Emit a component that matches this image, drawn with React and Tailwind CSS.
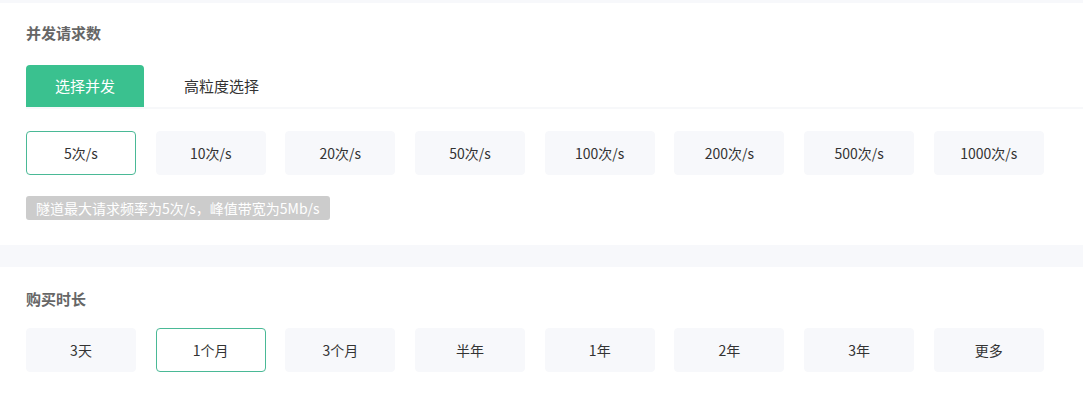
import React, { useState } from 'react'

const rates = ['5次/s', '10次/s', '20次/s', '50次/s', '100次/s', '200次/s', '500次/s', '1000次/s']
const durations = ['3天', '1个月', '3个月', '半年', '1年', '2年', '3年', '更多']

function OptionRow({ items, active, onPick }) {
  return (
    <div className="flex gap-[19.7px]">
      {items.map((it) => (
        <button
          key={it}
          onClick={() => onPick(it)}
          className={
            it === active
              ? 'w-[110px] h-[44px] rounded-[4px] border border-[#4ab996] bg-white text-[14px] text-[#333]'
              : 'w-[110px] h-[44px] rounded-[4px] border border-[#f7f8fb] bg-[#f7f8fb] text-[14px] text-[#333]'
          }
        >
          {it}
        </button>
      ))}
    </div>
  )
}

export default function App() {
  const [rate, setRate] = useState('5次/s')
  const [duration, setDuration] = useState('1个月')
  const [tab, setTab] = useState(0)

  return (
    <div
      className="w-[1083px] h-[395px] bg-white overflow-hidden"
      style={{ fontFamily: '"Microsoft YaHei", "Noto Sans CJK SC", "Noto Sans", sans-serif' }}
    >
      <div className="h-[3px] bg-[#f7f8fb]" />

      <section className="pl-[26px] pt-[18px] h-[242px]">
        <h3 className="text-[15px] leading-[24px] font-bold text-[#666]">并发请求数</h3>

        <div className="mt-[20px] flex border-b-2 border-[#f7f8fa]">
          {['选择并发', '高粒度选择'].map((t, i) => (
            <button
              key={t}
              onClick={() => setTab(i)}
              className={
                tab === i
                  ? 'w-[118px] h-[42px] rounded-t-[4px] bg-[#3ac18f] text-white text-[15px]'
                  : 'w-[155px] h-[42px] text-[#333] text-[15px]'
              }
            >
              {t}
            </button>
          ))}
        </div>

        <div className="mt-[22px]">
          <OptionRow items={rates} active={rate} onPick={setRate} />
        </div>

        <div className="mt-[21px] inline-flex items-center h-[24px] px-[10px] rounded-[3px] bg-[#cccccc] text-white text-[14px]">
          隧道最大请求频率为5次/s，峰值带宽为5Mb/s
        </div>
      </section>

      <div className="h-[22px] bg-[#f7f8fb]" />

      <section className="pl-[26px] pt-[20px]">
        <h3 className="text-[15px] leading-[24px] font-bold text-[#666]">购买时长</h3>
        <div className="mt-[17px]">
          <OptionRow items={durations} active={duration} onPick={setDuration} />
        </div>
      </section>
    </div>
  )
}
